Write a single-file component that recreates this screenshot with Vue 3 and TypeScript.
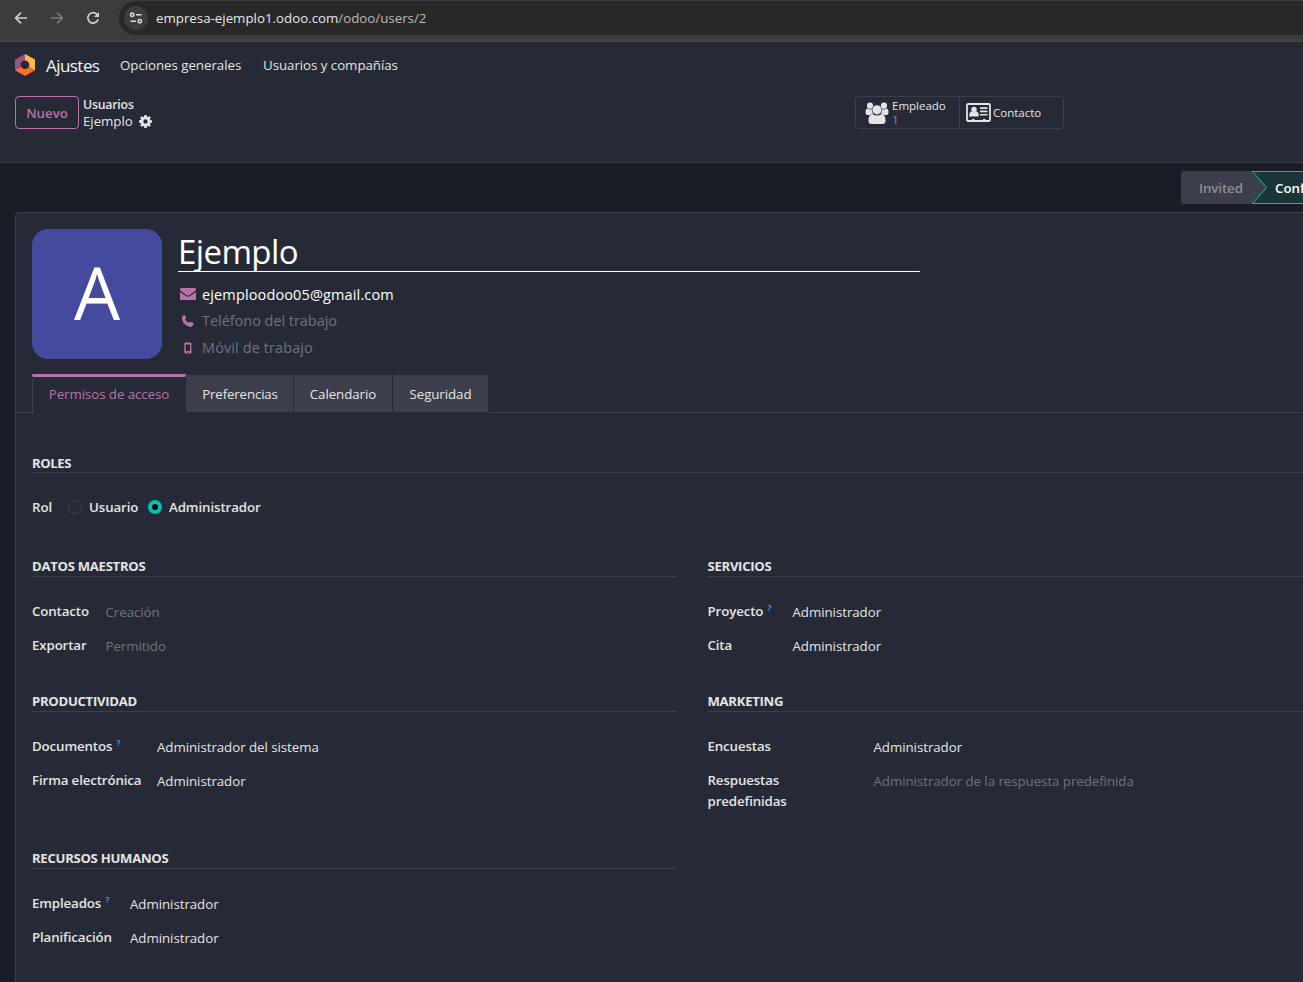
<script setup lang="ts">
interface Row { label: string; value: string; help?: boolean; muted?: boolean }
interface Group { title: string; cls: string; rows: Row[] }

const admin = 'Administrador'
const left: Group[] = [
  { title: 'Datos maestros', cls: 'master', rows: [
    { label: 'Contacto', value: 'Creación', muted: true },
    { label: 'Exportar', value: 'Permitido', muted: true },
  ] },
  { title: 'Productividad', cls: 'productivity', rows: [
    { label: 'Documentos', value: 'Administrador del sistema', help: true },
    { label: 'Firma electrónica', value: admin },
  ] },
  { title: 'Recursos humanos', cls: 'hr', rows: [
    { label: 'Empleados', value: admin, help: true },
    { label: 'Planificación', value: admin },
  ] },
]
const right: Group[] = [
  { title: 'Servicios', cls: 'services', rows: [
    { label: 'Proyecto', value: admin, help: true },
    { label: 'Cita', value: admin },
  ] },
  { title: 'Marketing', cls: 'marketing', rows: [
    { label: 'Encuestas', value: admin },
    { label: 'Respuestas predefinidas', value: 'Administrador de la respuesta predefinida', muted: true },
  ] },
]
const columns = [left, right]
const tabs = ['Permisos de acceso', 'Preferencias', 'Calendario', 'Seguridad']
</script>

<template>
  <div class="window">
    <header class="chrome">
      <svg class="nav-ico" width="16" height="16" viewBox="0 0 16 16"><path d="M14 8H3M8 2.6L2.6 8L8 13.4" fill="none" stroke="#d0d0d0" stroke-width="1.7" /></svg>
      <svg class="nav-ico" width="16" height="16" viewBox="0 0 16 16"><path d="M2 8h11M8 2.6L13.4 8L8 13.4" fill="none" stroke="#7b7b7b" stroke-width="1.7" /></svg>
      <svg class="nav-ico" width="16" height="16" viewBox="0 0 16 16"><path d="M13.1 9.2A5.2 5.2 0 1 1 11.7 4.2L13.2 5.7" fill="none" stroke="#d0d0d0" stroke-width="1.7" /><path d="M14 2v5H9z" fill="#d0d0d0" /></svg>
      <div class="address">
        <span class="site">
          <svg width="14" height="14" viewBox="0 0 14 14" fill="none" stroke="#dedede" stroke-width="1.5"><circle cx="3.2" cy="3.8" r="1.7" /><path d="M7 3.8h5.5M1.5 10.2H7" /><circle cx="10.8" cy="10.2" r="1.7" /></svg>
        </span>
        <span class="url">empresa-ejemplo1.odoo.com<i>/odoo/users/2</i></span>
      </div>
    </header>

    <nav class="menu">
      <svg class="logo" width="20" height="22" viewBox="0 0 20 22">
        <path d="M10 0L0 5.5V16.200L10 11z" fill="#985184" />
        <path d="M10 0L20 5.5V16.200L10 11z" fill="#fbb945" />
        <path d="M0 16.200L6 13H14L20 16.200L10 22z" fill="#fc6d2b" />
        <circle cx="10" cy="10.800" r="4.300" fill="#262a36" />
      </svg>
      <span class="app">Ajustes</span>
      <span class="entry general">Opciones generales</span>
      <span class="entry users">Usuarios y compañías</span>
    </nav>

    <section class="control">
      <button class="new">Nuevo</button>
      <div class="crumbs">
        <b>Usuarios</b>
        <div class="current"><span>Ejemplo</span>
          <svg width="13" height="13" viewBox="0 0 1536 1536"><path fill="#e4e4e4" d="M1024 768q0-106-75-181t-181-75-181 75-75 181 75 181 181 75 181-75 75-181zm512-109v222q0 12-8 23t-20 13l-185 28q-19 54-39 91 35 50 107 138 10 12 10 25t-9 23q-27 37-99 108t-94 71q-12 0-26-9l-138-108q-44 23-91 38-16 136-29 186-7 28-36 28H657q-14 0-24.500-8.500T621 1506l-28-184q-49-16-90-37l-141 107q-10 9-25 9-14 0-25-11-126-114-165-168-7-10-7-23 0-12 8-23 15-21 51-66.500t54-70.500q-27-50-41-99L29 913q-13-2-21-12.500T0 877V655q0-12 8-23t19-13l186-28q14-46 39-92-40-57-107-138-10-12-10-24 0-10 9-23 26-36 98.500-107.500T337 135q13 0 26 10l138 107q44-23 91-38 16-136 29-186 7-28 36-28h222q14 0 24.500 8.500T915 30l28 184q49 16 90 37l142-107q9-9 24-9 13 0 25 10 129 119 165 170 7 8 7 22 0 12-8 23-15 21-51 66.500t-54 70.500q26 50 41 98l183 28q13 2 21 12.500t8 23.500z" /></svg>
        </div>
      </div>
      <div class="stats">
        <div class="stat employee">
          <svg width="24" height="22" viewBox="0 0 24 22" fill="#e4e4e4"><circle cx="5" cy="3.700" r="3.100" /><circle cx="19" cy="3.700" r="3.100" /><path d="M2.200 6.500Q4.500 8 7 7.300Q6.700 10 8.300 11.500Q6 11.600 5 13H2.500Q.5 13 .5 10.500Q.5 7 2.200 6.500M21.800 6.500Q19.500 8 17 7.300Q17.300 10 15.700 11.500Q18 11.600 19 13h2.500Q23.500 13 23.500 10.500Q23.500 7 21.800 6.500" /><circle cx="12" cy="7.800" r="4.600" /><path d="M7.500 12Q12 15.200 16.500 12Q20.500 12.200 20.500 18.500Q20.500 22 17.500 22H6.500Q3.500 22 3.500 18.500Q3.500 12.200 7.500 12z" /></svg>
          <div><span>Empleado</span><em>1</em></div>
        </div>
        <div class="stat contact">
          <svg width="26" height="20" viewBox="0 0 26 20"><rect x="1" y="1" width="23" height="17" rx="1.300" fill="none" stroke="#e4e4e4" stroke-width="1.800" /><g fill="#e4e4e4"><circle cx="8" cy="6.500" r="2.700" /><path d="M5.800 8.300Q8 10 10.200 8.300Q13 9 12.800 13.500H3.200Q3 9 5.800 8.300M14 4.300h7.500v1.700H14zM14 7.600h7.500v1.700H14zM14 10.900h7.500v1.700H14zM6 16h2.500v2H6zM17 16h2.500v2H17z" /></g></svg>
          <span>Contacto</span>
        </div>
      </div>
    </section>

    <main class="body">
      <div class="statusbar">
        <span class="invited">Invited</span>
        <div class="confirmed">
          <svg width="90" height="33" viewBox="0 0 90 33"><path d="M.5 .5H95V32.500H.5L14.500 16.500z" fill="#1a3538" stroke="#07c2b1" /></svg>
          <b>Confirmed</b>
        </div>
      </div>

      <article class="sheet">
        <div class="profile">
          <div class="avatar"><span>A</span></div>
          <div class="identity">
            <h1><span>Ejemplo</span></h1>
            <div class="line mail">
              <svg width="16" height="12" viewBox="0 0 16 12" fill="#b973a8"><path d="M1 0H15Q16 0 16 1.300Q16 2.500 14.500 3.600L9.500 7Q8 8.200 6.500 7L1.500 3.600Q0 2.500 0 1.300Q0 0 1 0z" /><path d="M0 4L6 8Q8 9.500 10 8L16 4V11Q16 12 15 12H1Q0 12 0 11z" /></svg>
              <span>ejemploodoo05@gmail.com</span>
            </div>
            <div class="line phone">
              <svg width="16" height="12" viewBox="0 0 16 12"><path fill="#b973a8" d="M2.300 1.500Q4.500-.7 5.200.6L6.200 2.800Q6.400 3.400 5 4.300Q6 6.900 8.900 8Q9.800 6.500 10.500 6.800L13 8.100Q14 8.500 13.300 10.100Q12.300 12 10.400 11.900Q3.300 10.800 2 4Q1.800 2.400 2.300 1.500z" /></svg>
              <span>Teléfono del trabajo</span>
            </div>
            <div class="line mobile">
              <svg width="16" height="12" viewBox="0 0 16 12"><path fill="#b973a8" fill-rule="evenodd" d="M5.500 .5H10.200Q11.400 .5 11.400 1.500V10.500Q11.400 11.500 10.200 11.500H5.500Q4.300 11.500 4.300 10.500V1.500Q4.300 .5 5.500 .5M5.700 2.500V9H10V2.500zM7.400 9.700v1h1v-1z" /></svg>
              <span>Móvil de trabajo</span>
            </div>
          </div>
        </div>

        <div class="tabs">
          <div v-for="(t, i) in tabs" :key="t" class="tab" :class="['t' + i, { active: i === 0 }]"><span>{{ t }}</span></div>
        </div>

        <section class="roles">
          <h2>Roles</h2>
          <div class="role-row">
            <b class="rl">Rol</b>
            <i class="radio" /><b class="ru">Usuario</b>
            <i class="radio on" /><b class="ra">Administrador</b>
          </div>
        </section>

        <div class="columns">
          <div v-for="(col, i) in columns" :key="i" class="column">
            <section v-for="g in col" :key="g.title" class="group" :class="g.cls">
              <h2>{{ g.title }}</h2>
              <div v-for="r in g.rows" :key="r.label" class="row">
                <div class="label"><b>{{ r.label }}</b><sup v-if="r.help">?</sup></div>
                <div class="value" :class="{ muted: r.muted }">{{ r.value }}</div>
              </div>
            </section>
          </div>
        </div>
      </article>
    </main>
  </div>
</template>

<style>
body { margin: 0; background: #1b1d26; overflow: hidden; }
</style>

<style scoped>
* { box-sizing: border-box; }
.window { width: 1303px; height: 982px; overflow: hidden; background: #1b1d26; color: #e4e4e4; font: 13.3px/21px "Open Sans", "Noto Sans", sans-serif; white-space: nowrap; display: flex; flex-direction: column; }
b { font-weight: 600; }
svg { flex: none; display: block; }
.chrome { height: 42px; flex: none; background: #3c3c3c; border-bottom: 1px solid #48494c; display: flex; padding: 1px 0 0 13px; }
.nav-ico { margin: 9px 20px 0 0; }
.address { margin-left: -2px; width: 1200px; flex: none; height: 34px; border-radius: 17px; background: #282828; display: flex; align-items: center; padding-left: 5px; }
.site { width: 24px; height: 24px; border-radius: 50%; background: #3c3c3c; display: grid; place-items: center; }
.url { margin-left: 8px; font-size: 13.3px; color: #e6e6e6; }
.url i { font-style: normal; color: #b9b9b9; }
.menu { height: 46px; flex: none; background: #262a36; display: flex; align-items: center; padding-left: 15px; letter-spacing: -.04px; }
.app { margin-left: 11px; width: 74px; font-size: 17px; letter-spacing: -.55px; color: #f4f4f4; }
.entry.general { width: 143px; }
.control { height: 75px; flex: none; background: #262a36; border-bottom: 1px solid #3c3e4b; display: flex; padding: 8px 0 0 15px; }
.new { width: 64px; height: 33px; border: 1px solid #b973a8; border-radius: 4px; background: none; color: #b973a8; font: 600 13.3px "Open Sans", sans-serif; padding: 0; }
.crumbs { margin-left: 4px; width: 772px; line-height: 17px; font-size: 13.3px; }
.crumbs b { display: block; font-size: 12.300px; letter-spacing: -.2px; }
.current { display: flex; align-items: center; gap: 6px; }
.current span { letter-spacing: -.04px; }
.stats { width: 209px; height: 33px; border: 1px solid #3c3e4b; border-radius: 4px; display: flex; font-size: 11.500px; line-height: 14px; }
.stat { display: flex; align-items: center; }
.stat.employee { width: 104px; border-right: 1px solid #3c3e4b; padding-left: 9px; gap: 3px; }
.stat.employee div { padding-top: 1px; }
.stat.contact { padding-left: 6px; gap: 1px; }
.stat span, .stat em { display: block; font-style: normal; }
.stat em { color: #b973a8; }
.body { flex: 1; padding: 8px 0 0 15px; }
.statusbar { height: 33px; display: flex; padding-left: 1166px; }
.invited { flex: none; width: 71px; height: 33px; background: #3c3e4b; color: #8b8e98; font-weight: 600; line-height: 34px; padding-left: 18px; letter-spacing: -.1px; border-radius: 3px 0 0 3px; }
.confirmed { flex: none; width: 90px; position: relative; color: #fff; line-height: 34px; background: linear-gradient(90deg, #3c3e4b 15px, transparent 15px); }
.confirmed svg { position: absolute; left: 0; top: 0; }
.confirmed b { position: relative; margin-left: 23px; }
.sheet { margin-top: 8px; width: 1340px; height: 800px; background: #262a36; border: 1px solid #3c3e4b; border-radius: 4px 0 0 0; }
.profile { display: flex; padding: 16px 0 0 16px; height: 161px; }
.avatar { width: 130px; height: 130px; border-radius: 16px; background: #444b9f; color: #fff; display: grid; place-items: center; font-size: 73px; font-weight: 500; line-height: 126px; height: 130px; align-items: start; }
.identity { margin-left: 16px; width: 742px; color: #fff; }
h1 { margin: 0; height: 43px; border-bottom: 1px solid #fff; font-size: 33px; line-height: 46px; font-weight: 400; letter-spacing: -.6px; overflow: hidden; }
.line { display: flex; align-items: center; gap: 6px; padding-left: 2px; height: 27px; font-size: 14.500px; }
.line.mail { margin-top: 9px; height: 26px; letter-spacing: .13px; }
.line.phone, .line.mobile { color: #6e7280; }
.line.phone { letter-spacing: -.04px; }
.line.mobile { letter-spacing: .1px; }
.tabs { height: 39px; display: flex; padding-left: 16px; align-items: flex-end; background: linear-gradient(#3c3e4b, #3c3e4b) bottom / 100% 1px no-repeat; }
.tab { height: 39px; padding: 2px 0 0; border-right: 1px solid #262a36; display: flex; background: linear-gradient(#3c3e4b, #3c3e4b) 0 1px / 100% 37px no-repeat #262a36; line-height: 37px; text-align: center; letter-spacing: -.07px; }
.tab span { flex: 1; }
.tab.active { background: #262a36; border-top: 3px solid #b973a8; border-left: 1px solid #3c3e4b; color: #b973a8; padding: 0; line-height: 35px; }
.t0 { width: 154px; } .t1 { width: 108px; } .t2 { width: 99px; } .t3 { width: 96px; }
.t1 span { padding-left: 1px; letter-spacing: -.15px; }
h2 { margin: 0; height: 21px; font-size: 13.100px; line-height: 21px; font-weight: 700; text-transform: uppercase; border-bottom: 1px solid #3c3e4b; letter-spacing: -.27px; }
.roles { padding: 39px 0 0 16px; }
.roles h2 { line-height: 23px; letter-spacing: -.4px; }
.role-row { display: flex; align-items: center; height: 21px; margin-top: 24px; letter-spacing: -.1px; }
.rl { width: 36px; } .ru { width: 58.500px; }
.radio { width: 14px; height: 14px; border: 1px solid #3c3e4b; border-radius: 50%; margin: -1px 7px 0 0; }
.ra { padding-left: .5px; }
.radio.on { border: 4px solid #00c4b3; background: #000; }
.columns { display: flex; gap: 31.500px; padding: 38px 0 0 16px; }
.column { width: 644px; flex: none; }
.group { height: 135px; }
.row { display: flex; margin-top: 12px; }
h2 + .row { margin-top: 24px; }
.label { white-space: normal; flex: none; letter-spacing: -.13px; }
.value { padding-top: 1px; letter-spacing: -.05px; }
.value.muted { color: #6e7280; }
sup { color: #4ea2e8; font-size: 9.500px; font-weight: 600; line-height: 0; vertical-align: 5px; margin-left: 4px; }
.master .label { width: 73.500px; } .productivity .label { width: 125px; } .hr .label { width: 98px; }
.services .label { width: 85px; } .marketing .label { width: 166px; padding-right: 60px; }
.productivity { height: 157px; }
</style>
